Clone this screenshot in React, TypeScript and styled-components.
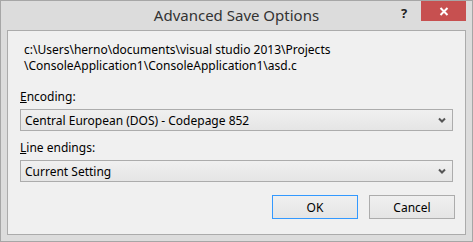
import styled, { createGlobalStyle } from "styled-components";

const GlobalStyle = createGlobalStyle`
    html, body {
        margin: 0;
        padding: 0;
        background: #dcdcdc;
    }
    * {
        box-sizing: border-box;
    }
`;

const WindowStyled = styled.div`
    display: flex;
    flex-direction: column;
    width: 473px;
    height: 242px;
    border: 1px solid #a6a6a6;
    background-color: #dcdcdc;
    font-family: "Noto Sans", "Open Sans", sans-serif;
    color: #000;
`;

const TitleBarStyled = styled.div`
    position: relative;
    display: flex;
    align-items: flex-start;
    justify-content: flex-end;
    height: 29px;
    padding-right: 6px;

    & > .title {
        position: absolute;
        left: 0;
        right: 0;
        top: 4px;
        text-align: center;
        font-size: 15px;
        color: #333;
    }
`;

const HelpButton = styled.div`
    width: 20px;
    height: 20px;
    margin-right: 7px;
    padding-top: 3px;
    text-align: center;
    font-size: 13px;
    font-weight: bold;
    color: #222;
`;

const CloseButton = styled.div`
    display: flex;
    align-items: center;
    justify-content: center;
    width: 45px;
    height: 20px;
    background-color: #c75050;
`;

const ClientStyled = styled.div`
    flex: 1;
    display: flex;
    flex-direction: column;
    margin: 0 6px 6px;
    padding: 11px 12px 0;
    border: 1px solid #ababab;
    background-color: #f0f0f0;
    font-size: 12px;
`;

const PathText = styled.div`
    display: flex;
    flex-direction: column;
    padding-left: 4px;
    margin-bottom: 15px;

    & > span {
        line-height: 16px;
    }
`;

const Label = styled.div`
    line-height: 15px;
    margin-bottom: 5px;

    & > u {
        text-decoration: underline;
    }
`;

const Select = styled.div<{ $last?: boolean }>`
    display: flex;
    align-items: center;
    justify-content: space-between;
    height: 22px;
    padding: 0 6px 0 4px;
    margin-bottom: ${(p) => (p.$last ? "13px" : "9px")};
    border: 1px solid #acacac;
    background: linear-gradient(#f0f0f0, #e5e5e5);
`;

const ButtonRow = styled.div`
    display: flex;
    justify-content: flex-end;
    gap: 11px;
    margin-right: -2px;
`;

const Button = styled.div<{ $focused?: boolean }>`
    display: flex;
    align-items: center;
    justify-content: center;
    width: 86px;
    height: 24px;
    border: 1px solid ${(p) => (p.$focused ? "#3399ff" : "#acacac")};
    background: linear-gradient(#f0f0f0, #e5e5e5);
`;

const Chevron = () => (
    <svg width="8" height="6" viewBox="0 0 8 6">
        <path d="M1 1.5 L4 4.5 L7 1.5" fill="none" stroke="#555" strokeWidth="2" />
    </svg>
);

const CloseGlyph = () => (
    <svg width="10" height="9" viewBox="0 0 10 9">
        <path d="M1.5 1 L8.5 8 M8.5 1 L1.5 8" stroke="#fff" strokeWidth="2" />
    </svg>
);

const App = () => {
    return (
        <WindowStyled>
            <GlobalStyle />
            <TitleBarStyled>
                <span className="title">Advanced Save Options</span>
                <HelpButton>?</HelpButton>
                <CloseButton>
                    <CloseGlyph />
                </CloseButton>
            </TitleBarStyled>
            <ClientStyled>
                <PathText>
                    <span>c:\Users\herno\documents\visual studio 2013\Projects</span>
                    <span>\ConsoleApplication1\ConsoleApplication1\asd.c</span>
                </PathText>
                <Label>
                    <u>E</u>ncoding:
                </Label>
                <Select>
                    <span>Central European (DOS) - Codepage 852</span>
                    <Chevron />
                </Select>
                <Label>
                    <u>L</u>ine endings:
                </Label>
                <Select $last>
                    <span>Current Setting</span>
                    <Chevron />
                </Select>
                <ButtonRow>
                    <Button $focused>OK</Button>
                    <Button>Cancel</Button>
                </ButtonRow>
            </ClientStyled>
        </WindowStyled>
    );
};

export default App;
